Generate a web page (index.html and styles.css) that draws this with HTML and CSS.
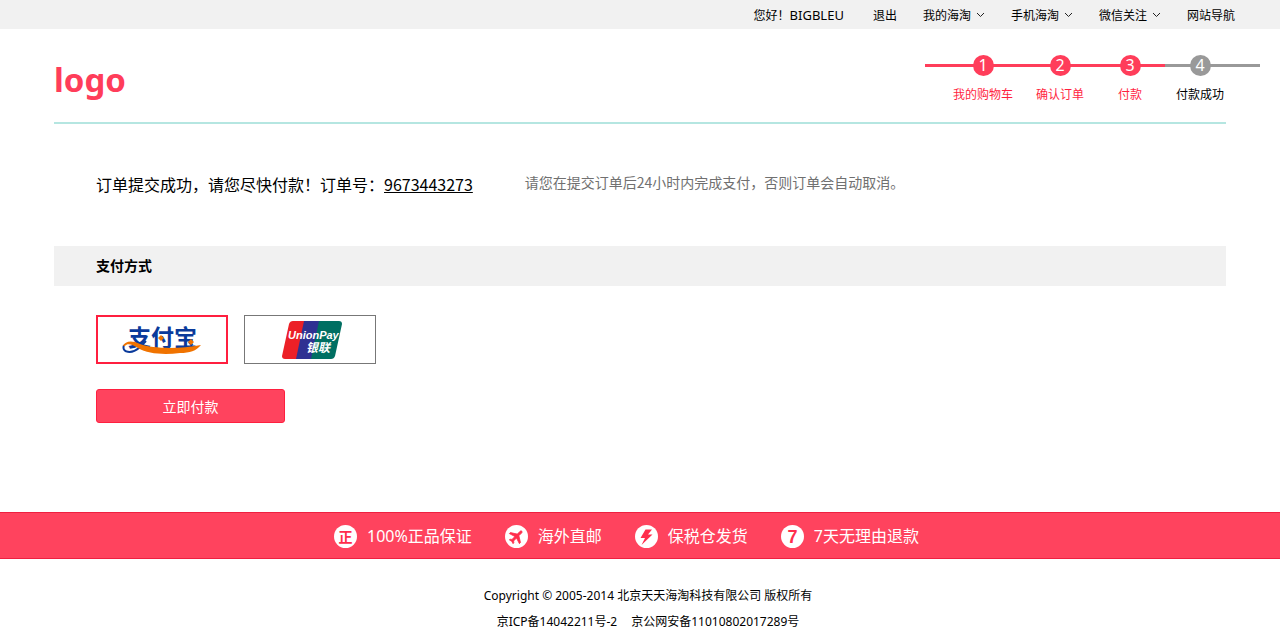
FILE: index.html
```html
<!DOCTYPE html>
<html lang="zh-CN">
<head>
  <meta charset="UTF-8">
  <meta name="viewport" content="width=device-width, initial-scale=1.0">
  <title>付款</title>
  <link rel="stylesheet" href="styles.css">
</head>
<body>

  <nav class="topbar">
    <a class="user" href="#">您好！<span>BIGBLEU</span></a>
    <a href="#">退出</a>
    <a href="#">我的海淘<svg class="arrow" viewBox="0 0 9 6"><path d="M1 1l3.5 3.5L8 1"/></svg></a>
    <a href="#">手机海淘<svg class="arrow" viewBox="0 0 9 6"><path d="M1 1l3.5 3.5L8 1"/></svg></a>
    <a href="#">微信关注<svg class="arrow" viewBox="0 0 9 6"><path d="M1 1l3.5 3.5L8 1"/></svg></a>
    <a href="#">网站导航</a>
  </nav>

  <div class="container">
    <header class="header">
      <a class="logo" href="#">logo</a>
      <ol class="steps">
        <li class="done"><span class="num">1</span>我的购物车</li>
        <li class="done"><span class="num">2</span>确认订单</li>
        <li class="done"><span class="num">3</span>付款</li>
        <li><span class="num">4</span>付款成功</li>
      </ol>
    </header>

    <div class="order">
      <p class="order-msg">订单提交成功，请您尽快付款！订单号：<a href="#">9673443273</a></p>
      <p class="order-tip">请您在提交订单后24小时内完成支付，否则订单会自动取消。</p>
    </div>

    <h2 class="title">支付方式</h2>

    <form class="pay">
      <div class="methods">
        <label class="method">
          <input type="radio" name="pay" value="alipay" aria-label="支付宝" checked>
          <svg width="80" height="44" viewBox="0 -8 80 44">
            <text class="alipay-text" x="6" y="20">支付宝</text>
            <path d="M2 19C-1 27 10 28 17 22L24 15" fill="none" stroke="#0a3a9b" stroke-width="2"/>
            <path d="M1 20C3 15 10 14 18 18C32 23 58 23 79 19C74 25 68 27 58 27C42 29 26 28 16 22C10 18 5 17 3 20z" fill="#f07300"/>
            <path d="M39 9l3 3-3 3-3-3zM69 13l3 3-3 3-3-3z" fill="#f07300"/>
          </svg>
        </label>
        <label class="method">
          <input type="radio" name="pay" value="unionpay" aria-label="银联">
          <svg class="unionpay" width="60" height="38" viewBox="0 0 60 38">
            <path d="M11 0H24L15 38H3Q0 38 0 35L7 3Q8 0 11 0z" fill="#ec2027"/>
            <path d="M22 0H38L30 38H14z" fill="#2f3192"/>
            <path d="M37 0H57Q60 0 60 3L53 35Q52 38 49 38H29z" fill="#006f62"/>
            <text class="union-en" x="6" y="18">UnionPay</text>
            <text class="union-cn" x="24" y="31">银联</text>
          </svg>
        </label>
      </div>
      <button type="submit">立即付款</button>
    </form>
  </div>

  <footer>
    <ul class="service">
      <li>
        <svg width="23" height="23" viewBox="0 0 23 23">
          <circle cx="11.5" cy="11.5" r="11.5"/>
          <text class="icon-zheng" x="11.5" y="17">正</text>
        </svg>
        100%正品保证
      </li>
      <li>
        <svg width="23" height="23" viewBox="0 0 23 23">
          <circle cx="11.5" cy="11.5" r="11.5"/>
          <path class="plane" transform="translate(11.5 11.5) rotate(45) scale(.75) translate(-11.5 -12)" d="M21 16v-2l-8-5V3.500c0-.83-.67-1.500-1.500-1.500S10 2.670 10 3.500V9l-8 5v2l8-2.500V19l-2 1.500V22l3.500-1 3.500 1v-1.500L13 19v-5.500l8 2.500z"/>
        </svg>
        海外直邮
      </li>
      <li>
        <svg width="23" height="23" viewBox="0 0 23 23">
          <circle cx="11.5" cy="11.5" r="11.5"/>
          <path class="bolt" d="M17 4.500H10.500L5.500 13H10L6.500 20L17.500 9.500H13z"/>
        </svg>
        保税仓发货
      </li>
      <li>
        <svg width="23" height="23" viewBox="0 0 23 23">
          <circle cx="11.5" cy="11.5" r="11.5"/>
          <text class="icon-seven" x="11.5" y="18">7</text>
        </svg>
        7天无理由退款
      </li>
    </ul>
    <div class="copyright">
      <p>Copyright © 2005-2014 北京天天海淘科技有限公司 版权所有</p>
      <p><span>京ICP备14042211号-2</span><span>京公网安备11010802017289号</span></p>
    </div>
  </footer>

</body>
</html>
```
FILE: styles.css
```css
* {
  margin: 0;
  padding: 0;
  box-sizing: border-box;
}
body {
  font-family: "Noto Sans", "Noto Sans CJK SC", sans-serif;
  font-size: 12px;
  color: #000;
  background-color: #fff;
}
a {
  color: inherit;
  text-decoration: none;
}
ul, ol {
  list-style: none;
}

/* top bar */
.topbar {
  display: flex;
  justify-content: flex-end;
  align-items: baseline;
  gap: 26px;
  padding: 1px 45px 0 0;
  height: 29px;
  line-height: 28px;
  background-color: #f1f1f1;
}
.user {
  margin-right: 3px;
}
.user span {
  font-size: 13px;
}
.arrow {
  width: 9px;
  height: 6px;
  margin-left: 5px;
  vertical-align: 2px;
  fill: none;
  stroke: #222;
}

/* header */
.container {
  margin: 0 54px;
}
.header {
  display: flex;
  justify-content: space-between;
  height: 95px;
  border-bottom: 2px solid #b5e6e1;
}
.logo {
  padding-top: 27px;
  font-size: 33px;
  line-height: 48px;
  font-weight: bold;
  color: #ff3d5a;
}
.steps {
  display: grid;
  grid-template-columns: 80px 74px 66px 74px;
  align-self: flex-start;
  margin: 26px -34px 0 0;
  padding: 0 23px 0 18px;
  background: linear-gradient(to right, #ff3d5a 240px, #999 240px) no-repeat 0 9px / 100% 3px;
}
.steps li {
  text-align: center;
  line-height: 20px;
}
.steps .done {
  color: #ff1f3f;
}
.num {
  display: block;
  width: 21px;
  height: 21px;
  margin: 0 auto 9px;
  border-radius: 50%;
  font-size: 16px;
  line-height: 21px;
  color: #fff;
  background-color: #999;
}
.done .num {
  background-color: #ff3d5a;
}

/* order */
.order {
  display: flex;
  gap: 52px;
  padding: 48px 42px 50px;
  font-family: "Noto Sans CJK SC", sans-serif;
}
.order-msg {
  font-size: 16px;
  line-height: 24px;
}
.order-msg a {
  text-decoration: underline;
}
.order-tip {
  font-size: 14px;
  line-height: 20px;
  color: #707070;
}
.title {
  padding-left: 42px;
  font-size: 14px;
  line-height: 40px;
  background-color: #f1f1f1;
}

/* payment */
.pay {
  padding: 29px 42px 89px;
}
.methods {
  display: flex;
  gap: 16px;
  margin-bottom: 25px;
}
.method {
  position: relative;
  display: flex;
  justify-content: center;
  align-items: center;
  width: 132px;
  height: 49px;
  border: 1px solid #777;
  cursor: pointer;
}
.method:has(input:checked) {
  border: 2px solid #ff1f3f;
}
.method input {
  position: absolute;
  opacity: 0;
}
.unionpay {
  margin-left: 4px;
}
.alipay-text {
  font-family: "Noto Sans CJK SC", sans-serif;
  font-size: 23px;
  font-weight: bold;
  fill: #0a3a9b;
}
.union-en {
  font-family: "Liberation Sans", sans-serif;
  font-size: 11px;
  font-weight: bold;
  font-style: italic;
  fill: #fff;
}
.union-cn {
  font-family: "Liberation Sans", "Noto Sans CJK SC", sans-serif;
  font-size: 12px;
  font-weight: bold;
  font-style: italic;
  fill: #fff;
}
.pay button {
  display: block;
  width: 189px;
  height: 34px;
  border: 1px solid #ff1f3f;
  border-radius: 3px;
  font-family: inherit;
  font-size: 14px;
  color: #fff;
  background-color: #ff435e;
}

/* footer */
.service {
  display: flex;
  justify-content: center;
  gap: 33px;
  padding: 1px 27px 0 0;
  border: solid #ee2040;
  border-width: 1px 0;
  font-size: 16px;
  line-height: 44px;
  color: #fff;
  background-color: #ff435e;
}
.service li {
  display: flex;
  align-items: center;
  gap: 10px;
}
.service circle {
  fill: #fff;
}
.service text {
  font-weight: bold;
  text-anchor: middle;
  fill: #ff2d4c;
}
.icon-zheng {
  font-size: 14px;
}
.icon-seven {
  font-family: "Liberation Sans", sans-serif;
  font-size: 18px;
}
.plane {
  fill: #ff2d4c;
  stroke: #ff2d4c;
}
.bolt {
  fill: #ff2d4c;
}
.copyright {
  padding: 24px 0 0 16px;
  text-align: center;
  line-height: 26px;
}
.copyright p {
  display: flex;
  justify-content: center;
  gap: 14px;
}
.copyright p:last-child {
  height: 21px;
}
```
